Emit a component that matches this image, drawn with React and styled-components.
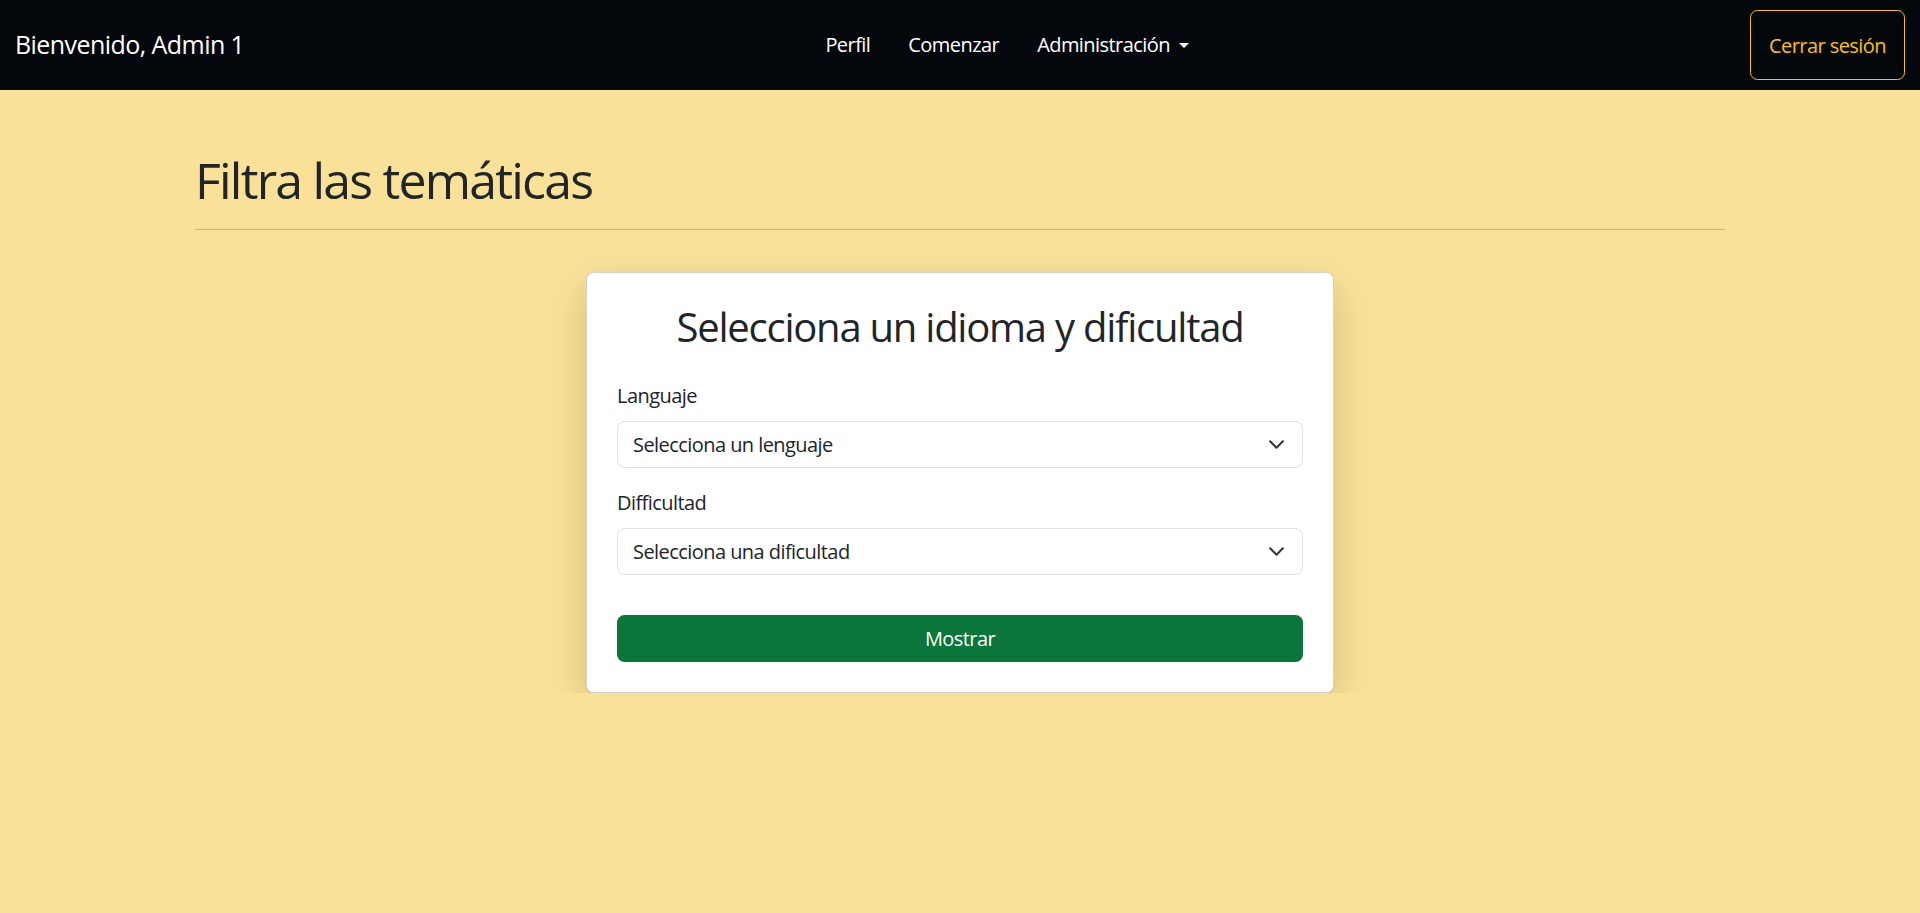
import React from "react";
import styled, { createGlobalStyle } from "styled-components";

const GlobalStyle = createGlobalStyle`
  html, body {
    margin: 0;
    padding: 0;
  }
  body {
    background: #f9e298;
    font-family: "Open Sans", "Liberation Sans", sans-serif;
    font-size: 20px;
    line-height: 1.5;
    letter-spacing: -0.028em;
    color: #212529;
  }
  * {
    box-sizing: border-box;
  }
`;

const Navbar = styled.nav`
  display: flex;
  align-items: center;
  height: 90px;
  padding: 10px 15px;
  background: #04070b;
`;

const Brand = styled.a`
  font-size: 25px;
  color: #fff;
  margin-right: 20px;
  text-decoration: none;
  white-space: nowrap;
`;

const NavLinks = styled.div`
  display: flex;
  align-items: center;
  gap: 18px;
  margin: 0 auto;
`;

const NavLink = styled.a`
  display: flex;
  align-items: center;
  padding: 10px 10px;
  color: #fff;
  text-decoration: none;
  white-space: nowrap;
`;

const Caret = styled.span`
  display: inline-block;
  margin-left: 9px;
  border-top: 5px solid #fff;
  border-left: 5px solid transparent;
  border-right: 5px solid transparent;
`;

const LogoutButton = styled.button`
  height: 70px;
  padding: 0 18px;
  background: transparent;
  border: 1px solid #ffc107;
  border-radius: 7.5px;
  color: #ffc107;
  font-family: inherit;
  font-size: 20px;
  letter-spacing: inherit;
  cursor: pointer;
`;

const Container = styled.main`
  width: 1560px;
  margin: 0 auto;
  padding: 60px 15px 0;
`;

const Title = styled.h1`
  margin: 0;
  font-size: 50px;
  font-weight: 400;
  line-height: 60px;
  letter-spacing: -0.036em;
`;

const Rule = styled.hr`
  margin: 19px 0 42px;
  border: 0;
  border-top: 1px solid #c2b385;
`;

const Card = styled.section`
  width: 748px;
  margin: 0 auto;
  padding: 30px;
  background: #fff;
  border: 1px solid rgba(0, 0, 0, 0.175);
  border-radius: 7.5px;
  box-shadow: 0 14px 40px rgba(0, 0, 0, 0.16);
`;

const CardTitle = styled.h2`
  margin: 0 0 30px;
  text-align: center;
  font-size: 40px;
  font-weight: 400;
  line-height: 48px;
  letter-spacing: -0.031em;
`;

const Field = styled.div`
  margin-bottom: 20px;
`;

const Label = styled.label`
  display: block;
  margin-bottom: 10px;
`;

const SelectBox = styled.div`
  display: flex;
  align-items: center;
  justify-content: space-between;
  height: 47px;
  padding: 0 17px 0 15px;
  border: 1px solid #dee2e6;
  border-radius: 7.5px;
  background: #fff;
`;

const Chevron = () => (
  <svg width="17" height="17" viewBox="0 0 16 16">
    <path
      d="m2 5 6 6 6-6"
      fill="none"
      stroke="#343a40"
      strokeWidth="2"
      strokeLinecap="round"
      strokeLinejoin="round"
    />
  </svg>
);

const SubmitButton = styled.button`
  display: block;
  width: 100%;
  height: 47px;
  margin-top: 40px;
  border: 0;
  border-radius: 7.5px;
  background: #0a7639;
  color: #fff;
  font-family: inherit;
  font-size: 20px;
  letter-spacing: inherit;
  cursor: pointer;
`;

function Select({ label, placeholder }) {
  return (
    <Field>
      <Label>{label}</Label>
      <SelectBox>
        <span>{placeholder}</span>
        <Chevron />
      </SelectBox>
    </Field>
  );
}

export default function App() {
  return (
    <>
      <GlobalStyle />
      <Navbar>
        <Brand href="#">Bienvenido, Admin 1</Brand>
        <NavLinks>
          <NavLink href="#">Perfil</NavLink>
          <NavLink href="#">Comenzar</NavLink>
          <NavLink href="#">
            Administración
            <Caret />
          </NavLink>
        </NavLinks>
        <LogoutButton>Cerrar sesión</LogoutButton>
      </Navbar>
      <Container>
        <Title>Filtra las temáticas</Title>
        <Rule />
        <Card>
          <CardTitle>Selecciona un idioma y dificultad</CardTitle>
          <Select label="Languaje" placeholder="Selecciona un lenguaje" />
          <Select label="Difficultad" placeholder="Selecciona una dificultad" />
          <SubmitButton>Mostrar</SubmitButton>
        </Card>
      </Container>
    </>
  );
}
